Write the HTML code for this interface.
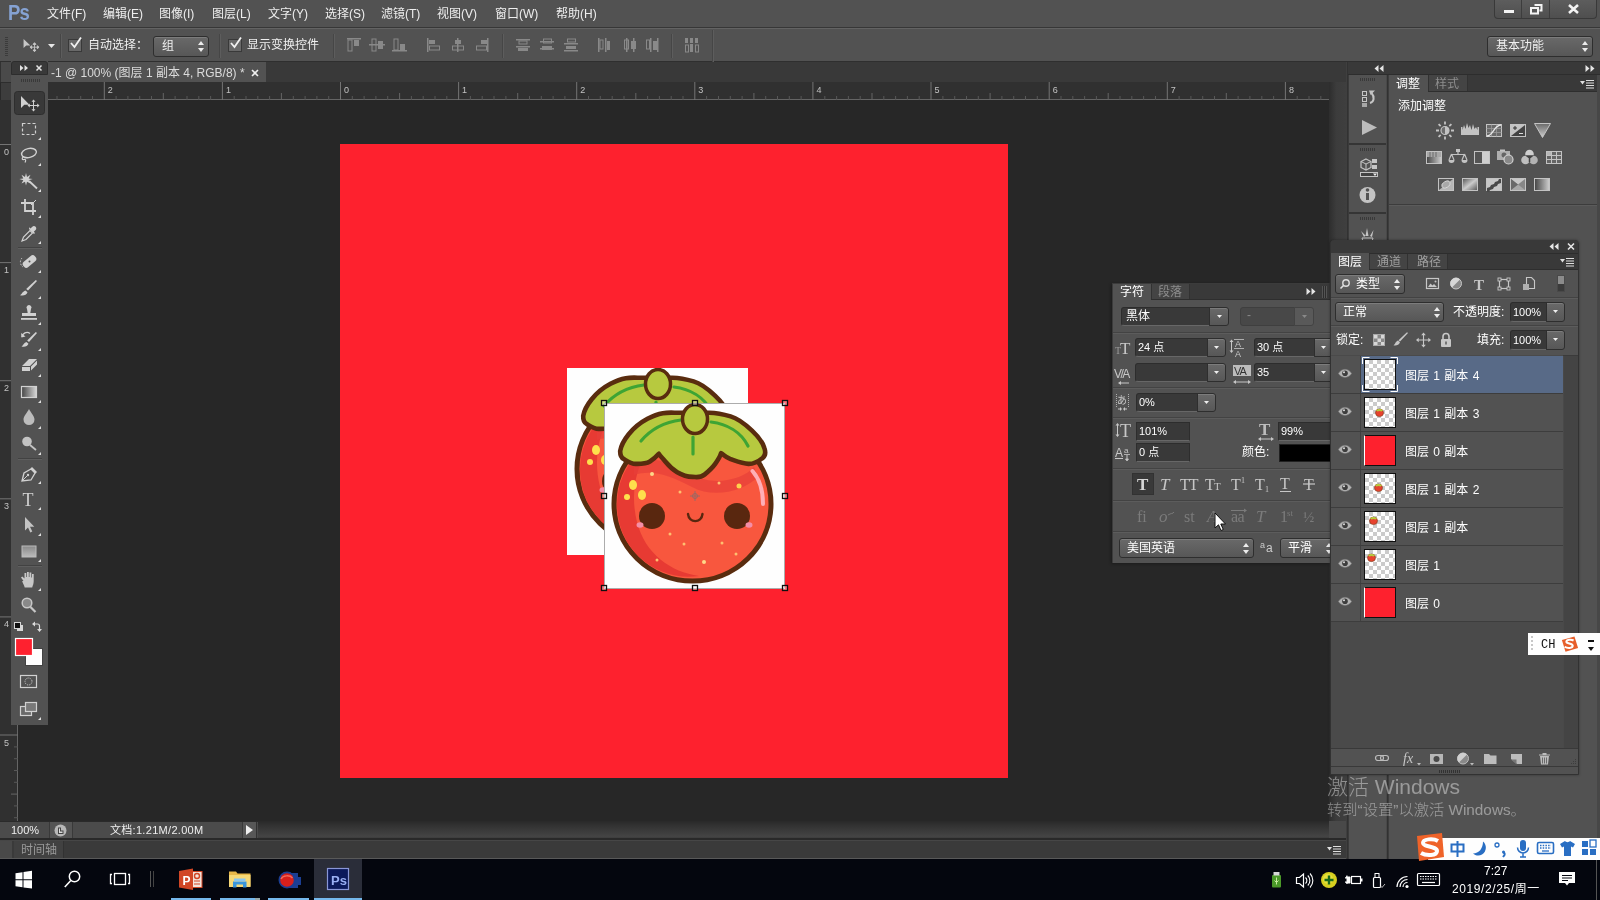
<!DOCTYPE html>
<html lang="zh-CN">
<head>
<meta charset="utf-8">
<title>Photoshop</title>
<style>
*{box-sizing:border-box;margin:0;padding:0}
html,body{width:1600px;height:900px;overflow:hidden;background:#535353}
body{position:relative;font-family:"Liberation Sans","Noto Sans CJK SC",sans-serif;font-size:12px;color:#f0f0f0;line-height:1}
.abs{position:absolute}
.t{position:absolute;white-space:nowrap;line-height:1}
svg{position:absolute;overflow:visible}
/* menu bar */
#menubar{left:0;top:0;width:1600px;height:28px;background:#535353;border-bottom:1px solid #383838}
#menubar .t{top:8px;font-size:12px;color:#efefef}
#menubar #ps{left:8px;top:2px;font-size:22px;font-weight:bold;color:#86a3d4;letter-spacing:-1px;font-family:"Liberation Sans",sans-serif;transform:scaleX(.84);transform-origin:left top}
/* options bar */
#optbar{left:0;top:28px;width:1600px;height:34px;background:#535353;border-top:1px solid #646464;border-bottom:1px solid #303030}
/* tab row */
#tabrow{left:0;top:62px;width:1347px;height:20px;background:#3a3a3a}
#tab{left:47px;top:0;width:219px;height:20px;background:#535353}
/* ruler */
#hruler{left:0;top:82px;width:1329px;height:18px;background:#313131}
#vruler{left:0;top:100px;width:18px;height:721px;background:#313131}
#work{left:18px;top:100px;width:1311px;height:721px;background:#282828}
#doc{left:340px;top:144px;width:668px;height:634px;background:#ff222f}
/* generic */
.dd{position:absolute;border:1px solid #2f2f2f;border-radius:3px;background:linear-gradient(#6a6a6a,#585858);box-shadow:inset 0 1px 0 #7d7d7d}
.inp{position:absolute;background:#3a3a3a;border:1px solid #2e2e2e;border-bottom-color:#686868}
.lbl{color:#f0f0f0}
</style>
</head>
<body>
<div id="root" style="position:absolute;left:0;top:0;width:1600px;height:900px;will-change:transform;opacity:.999">
<!-- ===== MENU BAR ===== -->
<div id="menubar" class="abs">
  <div id="ps" class="t">Ps</div>
  <div class="t" style="left:47px">文件(F)</div>
  <div class="t" style="left:103px">编辑(E)</div>
  <div class="t" style="left:159px">图像(I)</div>
  <div class="t" style="left:212px">图层(L)</div>
  <div class="t" style="left:268px">文字(Y)</div>
  <div class="t" style="left:325px">选择(S)</div>
  <div class="t" style="left:381px">滤镜(T)</div>
  <div class="t" style="left:437px">视图(V)</div>
  <div class="t" style="left:495px">窗口(W)</div>
  <div class="t" style="left:556px">帮助(H)</div>
  <!-- window buttons -->
  <div class="abs" style="left:1494px;top:0;width:103px;height:19px;border:1px solid #3a3a3a;border-top:none;border-radius:0 0 4px 4px;background:linear-gradient(#5e5e5e,#505050)"></div>
  <div class="abs" style="left:1521px;top:0;width:1px;height:18px;background:#3e3e3e"></div>
  <div class="abs" style="left:1549px;top:0;width:1px;height:18px;background:#3e3e3e"></div>
  <div class="abs" style="left:1504px;top:10px;width:10px;height:3px;background:#f4f4f4"></div>
  <svg style="left:1530px;top:4px" width="13" height="11" viewBox="0 0 13 11"><path d="M4.5 1h7v5.5h-2" fill="none" stroke="#f4f4f4" stroke-width="2"/><rect x="1" y="4" width="7" height="5.5" fill="none" stroke="#f4f4f4" stroke-width="2"/></svg>
  <svg style="left:1568px;top:4px" width="11" height="10" viewBox="0 0 11 10"><path d="M1 1l9 8M10 1l-9 8" stroke="#f4f4f4" stroke-width="2.600"/></svg>
</div>

<!-- ===== OPTIONS BAR ===== -->
<div id="optbar" class="abs"><div class="abs" style="left:0;top:1px;width:1600px;height:32px">
  <!-- grip -->
  <div class="abs" style="left:5px;top:7px;width:3px;height:19px;background:repeating-linear-gradient(#3c3c3c 0 1px,transparent 1px 2px)"></div>
  <!-- move tool icon -->
  <svg style="left:22px;top:8px" width="18" height="14" viewBox="0 0 20 16"><path d="M1.5 1v10.5l3-2.8h4.8z" fill="#c8c8c8"/><path d="M14 6.2v8.6M9.7 10.5h8.6M14 5.3l-1.7 2h3.4zM14 15.7l-1.7-2h3.4zM8.8 10.5l2-1.7v3.4zM19.2 10.5l-2-1.7v3.4z" stroke="#c8c8c8" stroke-width="1" fill="#c8c8c8"/></svg>
  <svg style="left:48px;top:14px" width="7" height="4" viewBox="0 0 7 4"><path d="M0 0h7l-3.5 4z" fill="#e8e8e8"/></svg>
  <div class="abs" style="left:60px;top:4px;width:1px;height:24px;background:#474747;box-shadow:1px 0 0 #5e5e5e"></div>
  <!-- checkbox 1 -->
  <div class="abs" style="left:68px;top:9px;width:14px;height:13px;background:#6a6a6a;border:1px solid #3a3a3a"></div>
  <svg style="left:69px;top:6px" width="14" height="14" viewBox="0 0 14 14"><path d="M2 7l3.5 4L12 1.5" fill="none" stroke="#f2f2f2" stroke-width="1.8"/></svg>
  <div class="t lbl" style="left:88px;top:9px;font-size:12px">自动选择：</div>
  <div class="dd" style="left:153px;top:6px;width:56px;height:21px"></div>
  <div class="t lbl" style="left:162px;top:10px">组</div>
  <svg style="left:198px;top:11px" width="6" height="11" viewBox="0 0 6 11"><path d="M0 4h6L3 0zM0 7h6l-3 4z" fill="#ededed"/></svg>
  <div class="abs" style="left:219px;top:4px;width:1px;height:24px;background:#474747;box-shadow:1px 0 0 #5e5e5e"></div>
  <!-- checkbox 2 -->
  <div class="abs" style="left:228px;top:9px;width:14px;height:13px;background:#6a6a6a;border:1px solid #3a3a3a"></div>
  <svg style="left:229px;top:6px" width="14" height="14" viewBox="0 0 14 14"><path d="M2 7l3.5 4L12 1.5" fill="none" stroke="#f2f2f2" stroke-width="1.8"/></svg>
  <div class="t lbl" style="left:247px;top:9px">显示变换控件</div>
  <div class="abs" style="left:333px;top:4px;width:1px;height:24px;background:#474747;box-shadow:1px 0 0 #5e5e5e"></div>
  <!-- align icons (disabled) -->
  <svg style="left:345px;top:7px" width="360" height="16" viewBox="0 0 360 16" fill="#8a8a8a" stroke="none">
    <!-- group 1: align top / vcenter / bottom -->
    <rect x="2" y="1" width="14" height="1.5"/><rect x="3" y="3" width="4" height="11" fill="none" stroke="#8a8a8a"/><rect x="9" y="3" width="5" height="6"/>
    <rect x="24" y="7" width="16" height="1.5"/><rect x="27" y="2" width="4" height="12" fill="none" stroke="#8a8a8a"/><rect x="33" y="4" width="5" height="8"/>
    <rect x="47" y="13" width="15" height="1.5"/><rect x="49" y="2" width="4" height="11" fill="none" stroke="#8a8a8a"/><rect x="55" y="7" width="5" height="6"/>
    <!-- group 2: align left / hcenter / right -->
    <rect x="82" y="1" width="1.5" height="14"/><rect x="84" y="3" width="6" height="4"/><rect x="84.5" y="9" width="10" height="4" fill="none" stroke="#8a8a8a"/>
    <rect x="112" y="1" width="1.5" height="14"/><rect x="110" y="3" width="6" height="4"/><rect x="107.500" y="9" width="11" height="4" fill="none" stroke="#8a8a8a"/>
    <rect x="142" y="1" width="1.500" height="14"/><rect x="136" y="3" width="6" height="4"/><rect x="131.500" y="9" width="10" height="4" fill="none" stroke="#8a8a8a"/>
    <!-- group 3: distribute vertical -->
    <rect x="171" y="2" width="14" height="1.5"/><rect x="174" y="4" width="8" height="3" fill="none" stroke="#8a8a8a"/><rect x="171" y="9" width="14" height="1.5"/><rect x="173" y="11" width="10" height="3"/>
    <rect x="195" y="4" width="14" height="1.500"/><rect x="198.500" y="2" width="8" height="4" fill="none" stroke="#8a8a8a"/><rect x="195" y="11" width="14" height="1.5"/><rect x="197" y="9" width="10" height="4"/>
    <rect x="219" y="6" width="14" height="1.5"/><rect x="222.500" y="2" width="8" height="3" fill="none" stroke="#8a8a8a"/><rect x="219" y="13" width="14" height="1.500"/><rect x="221" y="9" width="10" height="3"/>
    <!-- group 4: distribute horizontal -->
    <rect x="253" y="1" width="1.500" height="14"/><rect x="255" y="3" width="3" height="9" fill="none" stroke="#8a8a8a"/><rect x="260" y="1" width="1.5" height="14"/><rect x="262" y="4" width="3" height="9"/>
    <rect x="281" y="1" width="1.5" height="14"/><rect x="279.500" y="3" width="4" height="9" fill="none" stroke="#8a8a8a"/><rect x="288" y="1" width="1.5" height="14"/><rect x="286" y="4" width="5" height="8"/>
    <rect x="305" y="1" width="1.500" height="14"/><rect x="301.500" y="3" width="3" height="9" fill="none" stroke="#8a8a8a"/><rect x="312" y="1" width="1.500" height="14"/><rect x="308" y="4" width="4" height="9"/>
    <!-- auto-align -->
    <rect x="340" y="1" width="3" height="5"/><rect x="345" y="1" width="3" height="5"/><rect x="350" y="1" width="3" height="5"/>
    <rect x="340.500" y="8" width="3" height="7" fill="none" stroke="#8a8a8a"/><rect x="345" y="7" width="3" height="8"/><rect x="350.500" y="8" width="3" height="7" fill="none" stroke="#8a8a8a"/>
  </svg>
  <div class="abs" style="left:502px;top:4px;width:1px;height:24px;background:#474747;box-shadow:1px 0 0 #5e5e5e"></div>
  <div class="abs" style="left:671px;top:4px;width:1px;height:24px;background:#474747;box-shadow:1px 0 0 #5e5e5e"></div>
  <div class="abs" style="left:712px;top:0;width:1px;height:32px;background:#474747;box-shadow:1px 0 0 #5e5e5e"></div>
  <!-- workspace dropdown -->
  <div class="dd" style="left:1487px;top:6px;width:106px;height:21px"></div>
  <div class="t lbl" style="left:1496px;top:10px;font-size:12px">基本功能</div>
  <svg style="left:1582px;top:11px" width="6" height="11" viewBox="0 0 6 11"><path d="M0 4h6L3 0zM0 7h6l-3 4z" fill="#ededed"/></svg>
</div></div>

<!-- ===== TAB ROW ===== -->
<div id="tabrow" class="abs">
  <div id="tab" class="abs"></div>
  <div class="t" style="left:51px;top:5px;font-size:12px;color:#dcdcdc">-1 @ 100% (图层 1 副本 4, RGB/8) *</div>
  <svg style="left:251px;top:7px" width="8" height="8" viewBox="0 0 8 8"><path d="M1 1l6 6M7 1l-6 6" stroke="#f0f0f0" stroke-width="1.6"/></svg>
</div>
<!-- ===== RULERS + WORK AREA ===== -->
<div id="hruler" class="abs"></div><div id="vruler" class="abs"></div><div id="work" class="abs"></div>
<svg style="left:0;top:82px" width="1329" height="18" viewBox="0 0 1329 18"><rect x="47" y="17" width="1282" height="1" fill="#666"/><rect x="56.5" y="14" width="1" height="4" fill="#595959"/><rect x="68.3" y="14" width="1" height="4" fill="#595959"/><rect x="80.2" y="14" width="1" height="4" fill="#595959"/><rect x="92.0" y="14" width="1" height="4" fill="#595959"/><rect x="103.8" y="0" width="1" height="18" fill="#757575"/><rect x="115.6" y="14" width="1" height="4" fill="#595959"/><rect x="127.4" y="14" width="1" height="4" fill="#595959"/><rect x="139.2" y="14" width="1" height="4" fill="#595959"/><rect x="151.0" y="14" width="1" height="4" fill="#595959"/><rect x="162.8" y="11" width="1" height="7" fill="#666"/><rect x="174.6" y="14" width="1" height="4" fill="#595959"/><rect x="186.5" y="14" width="1" height="4" fill="#595959"/><rect x="198.3" y="14" width="1" height="4" fill="#595959"/><rect x="210.1" y="14" width="1" height="4" fill="#595959"/><rect x="221.9" y="0" width="1" height="18" fill="#757575"/><rect x="233.7" y="14" width="1" height="4" fill="#595959"/><rect x="245.5" y="14" width="1" height="4" fill="#595959"/><rect x="257.3" y="14" width="1" height="4" fill="#595959"/><rect x="269.1" y="14" width="1" height="4" fill="#595959"/><rect x="280.9" y="11" width="1" height="7" fill="#666"/><rect x="292.8" y="14" width="1" height="4" fill="#595959"/><rect x="304.6" y="14" width="1" height="4" fill="#595959"/><rect x="316.4" y="14" width="1" height="4" fill="#595959"/><rect x="328.2" y="14" width="1" height="4" fill="#595959"/><rect x="340.0" y="0" width="1" height="18" fill="#757575"/><rect x="351.8" y="14" width="1" height="4" fill="#595959"/><rect x="363.6" y="14" width="1" height="4" fill="#595959"/><rect x="375.4" y="14" width="1" height="4" fill="#595959"/><rect x="387.2" y="14" width="1" height="4" fill="#595959"/><rect x="399.1" y="11" width="1" height="7" fill="#666"/><rect x="410.9" y="14" width="1" height="4" fill="#595959"/><rect x="422.7" y="14" width="1" height="4" fill="#595959"/><rect x="434.5" y="14" width="1" height="4" fill="#595959"/><rect x="446.3" y="14" width="1" height="4" fill="#595959"/><rect x="458.1" y="0" width="1" height="18" fill="#757575"/><rect x="469.9" y="14" width="1" height="4" fill="#595959"/><rect x="481.7" y="14" width="1" height="4" fill="#595959"/><rect x="493.5" y="14" width="1" height="4" fill="#595959"/><rect x="505.4" y="14" width="1" height="4" fill="#595959"/><rect x="517.2" y="11" width="1" height="7" fill="#666"/><rect x="529.0" y="14" width="1" height="4" fill="#595959"/><rect x="540.8" y="14" width="1" height="4" fill="#595959"/><rect x="552.6" y="14" width="1" height="4" fill="#595959"/><rect x="564.4" y="14" width="1" height="4" fill="#595959"/><rect x="576.2" y="0" width="1" height="18" fill="#757575"/><rect x="588.0" y="14" width="1" height="4" fill="#595959"/><rect x="599.8" y="14" width="1" height="4" fill="#595959"/><rect x="611.7" y="14" width="1" height="4" fill="#595959"/><rect x="623.5" y="14" width="1" height="4" fill="#595959"/><rect x="635.3" y="11" width="1" height="7" fill="#666"/><rect x="647.1" y="14" width="1" height="4" fill="#595959"/><rect x="658.9" y="14" width="1" height="4" fill="#595959"/><rect x="670.7" y="14" width="1" height="4" fill="#595959"/><rect x="682.5" y="14" width="1" height="4" fill="#595959"/><rect x="694.3" y="0" width="1" height="18" fill="#757575"/><rect x="706.1" y="14" width="1" height="4" fill="#595959"/><rect x="718.0" y="14" width="1" height="4" fill="#595959"/><rect x="729.8" y="14" width="1" height="4" fill="#595959"/><rect x="741.6" y="14" width="1" height="4" fill="#595959"/><rect x="753.4" y="11" width="1" height="7" fill="#666"/><rect x="765.2" y="14" width="1" height="4" fill="#595959"/><rect x="777.0" y="14" width="1" height="4" fill="#595959"/><rect x="788.8" y="14" width="1" height="4" fill="#595959"/><rect x="800.6" y="14" width="1" height="4" fill="#595959"/><rect x="812.4" y="0" width="1" height="18" fill="#757575"/><rect x="824.3" y="14" width="1" height="4" fill="#595959"/><rect x="836.1" y="14" width="1" height="4" fill="#595959"/><rect x="847.9" y="14" width="1" height="4" fill="#595959"/><rect x="859.7" y="14" width="1" height="4" fill="#595959"/><rect x="871.5" y="11" width="1" height="7" fill="#666"/><rect x="883.3" y="14" width="1" height="4" fill="#595959"/><rect x="895.1" y="14" width="1" height="4" fill="#595959"/><rect x="906.9" y="14" width="1" height="4" fill="#595959"/><rect x="918.7" y="14" width="1" height="4" fill="#595959"/><rect x="930.5" y="0" width="1" height="18" fill="#757575"/><rect x="942.4" y="14" width="1" height="4" fill="#595959"/><rect x="954.2" y="14" width="1" height="4" fill="#595959"/><rect x="966.0" y="14" width="1" height="4" fill="#595959"/><rect x="977.8" y="14" width="1" height="4" fill="#595959"/><rect x="989.6" y="11" width="1" height="7" fill="#666"/><rect x="1001.4" y="14" width="1" height="4" fill="#595959"/><rect x="1013.2" y="14" width="1" height="4" fill="#595959"/><rect x="1025.0" y="14" width="1" height="4" fill="#595959"/><rect x="1036.8" y="14" width="1" height="4" fill="#595959"/><rect x="1048.7" y="0" width="1" height="18" fill="#757575"/><rect x="1060.5" y="14" width="1" height="4" fill="#595959"/><rect x="1072.3" y="14" width="1" height="4" fill="#595959"/><rect x="1084.1" y="14" width="1" height="4" fill="#595959"/><rect x="1095.9" y="14" width="1" height="4" fill="#595959"/><rect x="1107.7" y="11" width="1" height="7" fill="#666"/><rect x="1119.5" y="14" width="1" height="4" fill="#595959"/><rect x="1131.3" y="14" width="1" height="4" fill="#595959"/><rect x="1143.1" y="14" width="1" height="4" fill="#595959"/><rect x="1155.0" y="14" width="1" height="4" fill="#595959"/><rect x="1166.8" y="0" width="1" height="18" fill="#757575"/><rect x="1178.6" y="14" width="1" height="4" fill="#595959"/><rect x="1190.4" y="14" width="1" height="4" fill="#595959"/><rect x="1202.2" y="14" width="1" height="4" fill="#595959"/><rect x="1214.0" y="14" width="1" height="4" fill="#595959"/><rect x="1225.8" y="11" width="1" height="7" fill="#666"/><rect x="1237.6" y="14" width="1" height="4" fill="#595959"/><rect x="1249.4" y="14" width="1" height="4" fill="#595959"/><rect x="1261.3" y="14" width="1" height="4" fill="#595959"/><rect x="1273.1" y="14" width="1" height="4" fill="#595959"/><rect x="1284.9" y="0" width="1" height="18" fill="#757575"/><rect x="1296.7" y="14" width="1" height="4" fill="#595959"/><rect x="1308.5" y="14" width="1" height="4" fill="#595959"/><rect x="1320.3" y="14" width="1" height="4" fill="#595959"/><text x="107.8" y="11" font-size="9" fill="#c4c4c4" font-family="Liberation Sans, sans-serif">2</text><text x="225.9" y="11" font-size="9" fill="#c4c4c4" font-family="Liberation Sans, sans-serif">1</text><text x="344.0" y="11" font-size="9" fill="#c4c4c4" font-family="Liberation Sans, sans-serif">0</text><text x="462.1" y="11" font-size="9" fill="#c4c4c4" font-family="Liberation Sans, sans-serif">1</text><text x="580.2" y="11" font-size="9" fill="#c4c4c4" font-family="Liberation Sans, sans-serif">2</text><text x="698.3" y="11" font-size="9" fill="#c4c4c4" font-family="Liberation Sans, sans-serif">3</text><text x="816.4" y="11" font-size="9" fill="#c4c4c4" font-family="Liberation Sans, sans-serif">4</text><text x="934.5" y="11" font-size="9" fill="#c4c4c4" font-family="Liberation Sans, sans-serif">5</text><text x="1052.7" y="11" font-size="9" fill="#c4c4c4" font-family="Liberation Sans, sans-serif">6</text><text x="1170.8" y="11" font-size="9" fill="#c4c4c4" font-family="Liberation Sans, sans-serif">7</text><text x="1288.9" y="11" font-size="9" fill="#c4c4c4" font-family="Liberation Sans, sans-serif">8</text></svg>
<svg style="left:0;top:100px" width="18" height="721" viewBox="0 0 18 721"><rect x="17" y="0" width="1" height="721" fill="#666"/><rect x="14" y="8.6" width="4" height="1" fill="#595959"/><rect x="14" y="20.4" width="4" height="1" fill="#595959"/><rect x="14" y="32.2" width="4" height="1" fill="#595959"/><rect x="0" y="44.0" width="18" height="1" fill="#757575"/><rect x="14" y="55.8" width="4" height="1" fill="#595959"/><rect x="14" y="67.6" width="4" height="1" fill="#595959"/><rect x="14" y="79.4" width="4" height="1" fill="#595959"/><rect x="14" y="91.2" width="4" height="1" fill="#595959"/><rect x="11" y="103.1" width="7" height="1" fill="#666"/><rect x="14" y="114.9" width="4" height="1" fill="#595959"/><rect x="14" y="126.7" width="4" height="1" fill="#595959"/><rect x="14" y="138.5" width="4" height="1" fill="#595959"/><rect x="14" y="150.3" width="4" height="1" fill="#595959"/><rect x="0" y="162.1" width="18" height="1" fill="#757575"/><rect x="14" y="173.9" width="4" height="1" fill="#595959"/><rect x="14" y="185.7" width="4" height="1" fill="#595959"/><rect x="14" y="197.5" width="4" height="1" fill="#595959"/><rect x="14" y="209.4" width="4" height="1" fill="#595959"/><rect x="11" y="221.2" width="7" height="1" fill="#666"/><rect x="14" y="233.0" width="4" height="1" fill="#595959"/><rect x="14" y="244.8" width="4" height="1" fill="#595959"/><rect x="14" y="256.6" width="4" height="1" fill="#595959"/><rect x="14" y="268.4" width="4" height="1" fill="#595959"/><rect x="0" y="280.2" width="18" height="1" fill="#757575"/><rect x="14" y="292.0" width="4" height="1" fill="#595959"/><rect x="14" y="303.8" width="4" height="1" fill="#595959"/><rect x="14" y="315.7" width="4" height="1" fill="#595959"/><rect x="14" y="327.5" width="4" height="1" fill="#595959"/><rect x="11" y="339.3" width="7" height="1" fill="#666"/><rect x="14" y="351.1" width="4" height="1" fill="#595959"/><rect x="14" y="362.9" width="4" height="1" fill="#595959"/><rect x="14" y="374.7" width="4" height="1" fill="#595959"/><rect x="14" y="386.5" width="4" height="1" fill="#595959"/><rect x="0" y="398.3" width="18" height="1" fill="#757575"/><rect x="14" y="410.1" width="4" height="1" fill="#595959"/><rect x="14" y="422.0" width="4" height="1" fill="#595959"/><rect x="14" y="433.8" width="4" height="1" fill="#595959"/><rect x="14" y="445.6" width="4" height="1" fill="#595959"/><rect x="11" y="457.4" width="7" height="1" fill="#666"/><rect x="14" y="469.2" width="4" height="1" fill="#595959"/><rect x="14" y="481.0" width="4" height="1" fill="#595959"/><rect x="14" y="492.8" width="4" height="1" fill="#595959"/><rect x="14" y="504.6" width="4" height="1" fill="#595959"/><rect x="0" y="516.4" width="18" height="1" fill="#757575"/><rect x="14" y="528.3" width="4" height="1" fill="#595959"/><rect x="14" y="540.1" width="4" height="1" fill="#595959"/><rect x="14" y="551.9" width="4" height="1" fill="#595959"/><rect x="14" y="563.7" width="4" height="1" fill="#595959"/><rect x="11" y="575.5" width="7" height="1" fill="#666"/><rect x="14" y="587.3" width="4" height="1" fill="#595959"/><rect x="14" y="599.1" width="4" height="1" fill="#595959"/><rect x="14" y="610.9" width="4" height="1" fill="#595959"/><rect x="14" y="622.7" width="4" height="1" fill="#595959"/><rect x="0" y="634.5" width="18" height="1" fill="#757575"/><rect x="14" y="646.4" width="4" height="1" fill="#595959"/><rect x="14" y="658.2" width="4" height="1" fill="#595959"/><rect x="14" y="670.0" width="4" height="1" fill="#595959"/><rect x="14" y="681.8" width="4" height="1" fill="#595959"/><rect x="11" y="693.6" width="7" height="1" fill="#666"/><rect x="14" y="705.4" width="4" height="1" fill="#595959"/><rect x="14" y="717.2" width="4" height="1" fill="#595959"/><text x="4" y="55.0" font-size="9" fill="#c4c4c4" font-family="Liberation Sans, sans-serif">0</text><text x="4" y="173.1" font-size="9" fill="#c4c4c4" font-family="Liberation Sans, sans-serif">1</text><text x="4" y="291.2" font-size="9" fill="#c4c4c4" font-family="Liberation Sans, sans-serif">2</text><text x="4" y="409.3" font-size="9" fill="#c4c4c4" font-family="Liberation Sans, sans-serif">3</text><text x="4" y="527.4" font-size="9" fill="#c4c4c4" font-family="Liberation Sans, sans-serif">4</text><text x="4" y="645.5" font-size="9" fill="#c4c4c4" font-family="Liberation Sans, sans-serif">5</text></svg>
<div class="abs" style="left:0;top:62px;width:12px;height:20px;background:#4b4b4b;border-left:1px solid #333"></div><div class="abs" style="left:0;top:82px;width:18px;height:18px;background:#3e3e3e;border-left:1px solid #2a2a2a;border-top:1px solid #2e2e2e"></div>
<div id="doc" class="abs"></div>
<!-- ===== ARTWORK ===== -->
<svg style="left:0;top:0" width="1600" height="900" viewBox="0 0 1600 900">
  <defs>
    <g id="berry">
      <rect x="0" y="0" width="181" height="186" fill="#fff"/>
      <!-- body -->
      <ellipse cx="88.5" cy="101" rx="78.500" ry="77" fill="#f9583f" stroke="#5a2d10" stroke-width="5"/>
      <path d="M13 101a75.500 74 0 0 1 42-66c-22 20-30 52-22 84s34 50 62 54c-40 6-82-24-82-72z" fill="#e83b34"/>
      <path d="M30 60c20-8 40 0 60 12s50 4 60-8l4 10c-14 14-44 22-66 10s-40-18-58-12z" fill="#e8403a" opacity=".7"/>
      <!-- highlight -->
      <path d="M148.500 68c7 8 10.500 20 10.500 33" fill="none" stroke="#ffb0b8" stroke-width="4" stroke-linecap="round"/>
      <!-- yellow dots -->
      <ellipse cx="29" cy="82" rx="4" ry="5" fill="#ffe14d"/><ellipse cx="38" cy="92" rx="4" ry="5" fill="#ffe14d"/><circle cx="23" cy="94" r="3" fill="#ffe14d"/>
      <circle cx="48" cy="71" r="2" fill="#ffd98a"/><circle cx="135" cy="83" r="2.500" fill="#ffd24d"/><circle cx="115" cy="80" r="1.500" fill="#ffc070"/>
      <circle cx="76" cy="89" r="1.500" fill="#ffc070"/><circle cx="66" cy="131" r="1.500" fill="#ffc070"/><circle cx="80" cy="141" r="1.500" fill="#ffc070"/><circle cx="118" cy="140" r="1.500" fill="#ffc070"/><circle cx="100" cy="159" r="2" fill="#ffd98a"/><circle cx="132" cy="151" r="1.500" fill="#ffc070"/><circle cx="53" cy="157" r="1.500" fill="#ffc070"/>
      <!-- face -->
      <circle cx="48" cy="113" r="13" fill="#5a2810"/><circle cx="133" cy="113" r="13" fill="#5a2810"/>
      <ellipse cx="36" cy="122" rx="3.500" ry="2.800" fill="#f58fa8"/><ellipse cx="145" cy="122" rx="3.500" ry="2.800" fill="#f58fa8"/>
      <path d="M84 111c1 9.500 13.500 9.500 14.500 0" fill="none" stroke="#5a2810" stroke-width="2.400" stroke-linecap="round"/>
      <!-- leaf -->
      <path d="M16.200 47.800C18 38 28 24 43.500 15.800S66 10 76.800 9.800L105.300 9.800C112 10 118 11 126.600 13.400S142 22 148 27.600S159 40 160.500 45.400C162 50 161 53 158.700 54.900S150 61 144.500 60.900S132 58 126.600 56.100S120 52 117.100 50.200C116 54 114 57 111.200 60.900S105 68 100.500 71.600S93 74 88.600 73.900S78 72 73.200 69.200S65 63 61.300 58.500S57 54 54.800 50.800C52 54 50 56 45.900 58.500S36 61 31.600 60.900S23 58 19.800 56.100S16 52 16.200 47.800z" fill="#b8ca40" stroke="#5a2d10" stroke-width="4.600" stroke-linejoin="round"/>
      <path d="M37 38c10-12 24-19 40-21" fill="none" stroke="#3fa535" stroke-width="3.200" stroke-linecap="round"/>
      <path d="M107 19c16 2 30 10 37 24" fill="none" stroke="#3fa535" stroke-width="3.200" stroke-linecap="round"/>
      <path d="M89 34v17" fill="none" stroke="#3fa535" stroke-width="3.200" stroke-linecap="round"/>
      <!-- stem ball -->
      <ellipse cx="91" cy="16" rx="12.500" ry="14.500" fill="#b8ca40" stroke="#5a2d10" stroke-width="3.500"/>
    </g>
    <g id="hdl"><rect x="-2.500" y="-2.500" width="5" height="5" fill="#fff" fill-opacity=".4" stroke="#111" stroke-width="1.300"/></g>
  </defs>
  <clipPath id="cb"><rect x="0" y="0" width="181" height="187"/></clipPath>
  <g transform="translate(567,368)" clip-path="url(#cb)"><rect width="181" height="187" fill="#fff"/><use href="#berry"/></g>
  <g transform="translate(604,403)"><use href="#berry"/></g>
  <rect x="604.500" y="403.500" width="180" height="185" fill="none" stroke="#777" stroke-width=".6"/>
  <!-- transform handles -->
  <use href="#hdl" x="604" y="403"/><use href="#hdl" x="695" y="403"/><use href="#hdl" x="785" y="403"/>
  <use href="#hdl" x="604" y="496"/><use href="#hdl" x="785" y="496"/>
  <use href="#hdl" x="604" y="588"/><use href="#hdl" x="695" y="588"/><use href="#hdl" x="785" y="588"/>
  <!-- center mark -->
  <path d="M695 491v10M690 496h10" stroke="#9a6a66" stroke-width="1"/><circle cx="695" cy="496" r="2.500" fill="none" stroke="#9a6a66" stroke-width="1"/>
</svg>
<!-- ===== TOOLS PANEL ===== -->
<div class="abs" style="left:11px;top:61px;width:37px;height:664px;background:#535353"></div>
<div class="abs" style="left:11px;top:61px;width:37px;height:14px;background:#3a3a3a;border:1px solid #2e2e2e;border-radius:3px 3px 0 0"></div>
<svg style="left:0;top:0" width="60" height="730" viewBox="0 0 60 730" fill="#d2d2d2" stroke="none">
  <!-- header icons -->
  <path d="M20 65l3.500 3-3.500 3zM24.500 65l3.500 3-3.500 3z" fill="#e4e4e4"/>
  <path d="M36.500 65.500l5 5M41.500 65.500l-5 5" stroke="#e4e4e4" stroke-width="1.500"/>
  <!-- grip -->
  <g fill="#3a3a3a"><rect x="21" y="79" width="1" height="3"/><rect x="23" y="79" width="1" height="3"/><rect x="25" y="79" width="1" height="3"/><rect x="27" y="79" width="1" height="3"/><rect x="29" y="79" width="1" height="3"/><rect x="31" y="79" width="1" height="3"/><rect x="33" y="79" width="1" height="3"/><rect x="35" y="79" width="1" height="3"/><rect x="37" y="79" width="1" height="3"/><rect x="39" y="79" width="1" height="3"/></g>
  <!-- selected box -->
  <rect x="14.500" y="91.500" width="30" height="23" rx="3" fill="#3a3a3a" stroke="#2f2f2f"/>
  <!-- move -->
  <path d="M21 96v12l3.300-3.200h5.200z"/>
  <path d="M33.500 101v9M29 105.500h9" stroke="#d2d2d2" stroke-width="1"/><path d="M33.500 99.500l-2 2.300h4zM33.500 111.500l-2-2.300h4zM27.500 105.500l2.300-2v4zM39.500 105.500l-2.300-2v4z"/>
  <!-- marquee -->
  <rect x="22.500" y="123.500" width="13" height="11" fill="none" stroke="#d2d2d2" stroke-width="1.200" stroke-dasharray="3 2"/>
  <!-- lasso -->
  <ellipse cx="29" cy="153" rx="7.500" ry="4.500" fill="none" stroke="#d2d2d2" stroke-width="1.400" transform="rotate(-12 29 153)"/>
  <path d="M23.500 157c-2 1-1.500 3 .5 2.500s2 1 1 3" fill="none" stroke="#d2d2d2" stroke-width="1.200"/>
  <!-- wand -->
  <path d="M29 181l8 7.500" stroke="#d2d2d2" stroke-width="1.800"/>
  <path d="M26 173l1 4 3.500-2.200-1.800 3.700 4 .5-4 1.200 1.800 3.300-3.500-1.800-1 3.800-1-3.800-3.500 1.800 1.800-3.300-4-1.200 4-.5-1.800-3.700 3.500 2.200z"/>
  <!-- crop -->
  <path d="M25 199v12h11M21 203h12v12" fill="none" stroke="#d2d2d2" stroke-width="1.800"/><path d="M31 205l5-5" stroke="#d2d2d2" stroke-width="1"/>
  <!-- eyedropper -->
  <path d="M22 241l1.500-4 6.500-6.500 2.500 2.500-6.500 6.500z" fill="none" stroke="#d2d2d2" stroke-width="1.200"/><path d="M29 229l5 5 1-1-1.200-1.200 1.800-1.800c1-1 .8-2.500 0-3.300s-2.300-1-3.300 0l-1.800 1.800-1.200-1.200z"/>
  <!-- separator -->
  <rect x="18" y="247" width="24" height="1" fill="#434343"/><rect x="18" y="248" width="24" height="1" fill="#5f5f5f"/>
  <!-- heal -->
  <rect x="22" y="258" width="15" height="7" rx="3" transform="rotate(-40 29.500 261.500)"/><circle cx="29.500" cy="261.500" r="1" fill="#535353"/><path d="M22 258a6 6 0 0 0 1 9" fill="none" stroke="#d2d2d2" stroke-width="1" stroke-dasharray="1.500 1.500"/>
  <!-- brush -->
  <path d="M37 281l-9 9.500-1.800-1.600 9.600-9z"/><path d="M25.500 290.500l2 1.800c-1 3-4 3.700-7.500 3 2-1 2-3.500 5.500-4.800z"/>
  <!-- stamp -->
  <path d="M27 309a2.500 2.500 0 1 1 4 0l-.700 4h5.700v3h-14v-3h5.700z"/><rect x="21" y="318" width="16" height="1.800"/>
  <!-- history brush -->
  <path d="M37 333l-8 9-1.800-1.600 8.600-8.500z"/><path d="M26.500 342l2 1.800c-1 2.800-4 3.400-7 2.700 2-1 1.800-3.300 5-4.500z"/><path d="M22 337a5 5 0 0 1 8-3.500" fill="none" stroke="#d2d2d2" stroke-width="1.300"/><path d="M21 333l.500 4.500 4-1z"/>
  <!-- eraser -->
  <path d="M22 366l7-7h8l-7 7zM22 367h8v4h-8zM31 366.500l6-6v4l-6 6z"/>
  <!-- gradient -->
  <defs><linearGradient id="gr1" x1="0" x2="1"><stop offset="0" stop-color="#444"/><stop offset="1" stop-color="#d8d8d8"/></linearGradient><linearGradient id="gr2" x1="0" x2="0" y1="0" y2="1"><stop offset="0" stop-color="#8a8a8a"/><stop offset="1" stop-color="#bdbdbd"/></linearGradient></defs>
  <rect x="21.500" y="386.500" width="15" height="11" fill="url(#gr1)" stroke="#d2d2d2" stroke-width="1.200"/>
  <!-- blur drop -->
  <path d="M29 409c2 4 5.500 7 5.500 10.500a5.500 5.500 0 0 1-11 0c0-3.500 3.500-6.500 5.500-10.500z" fill="#bdbdbd"/>
  <!-- dodge -->
  <circle cx="27" cy="441.500" r="4.800" fill="#c4c4c4"/><path d="M30 445l6 5" stroke="#c4c4c4" stroke-width="1.800"/>
  <rect x="18" y="458" width="24" height="1" fill="#434343"/><rect x="18" y="459" width="24" height="1" fill="#5f5f5f"/>
  <!-- pen -->
  <path d="M22 481l2-8 7-4 4 4-4 7z" fill="none" stroke="#d2d2d2" stroke-width="1.300"/><path d="M22 481l5.500-5.500" stroke="#d2d2d2" stroke-width="1"/><circle cx="28" cy="475" r="1.200"/><path d="M32 467l5 5-1.500 1.500-5-5z"/>
  <!-- type -->
  <text x="22.500" y="505.500" font-family="Liberation Serif, serif" font-size="18" fill="#d2d2d2">T</text>
  <!-- path select -->
  <path d="M25 517v13.500l3-3 2.300 5 2-1-2.300-4.800h4.300z" fill="#c4c4c4"/>
  <!-- shape -->
  <rect x="22" y="546" width="14" height="11" fill="url(#gr2)" stroke="#bdbdbd" stroke-width="1"/>
  <rect x="18" y="565" width="24" height="1" fill="#434343"/><rect x="18" y="566" width="24" height="1" fill="#5f5f5f"/>
  <!-- hand -->
  <path d="M23.500 581l-2.500-3.500 1.300-1 2.200 2v-5.500h1.800v4h.7v-5h1.800v5h.7v-4.500h1.800v5h.7v-3.500h1.700v7c0 3-1 4.500-1.500 6.500h-7.500c-.500-2.500-2-4-2.500-6.500z" fill="#c8c8c8"/>
  <!-- zoom -->
  <circle cx="27" cy="603" r="4.800" fill="#8a8a8a" stroke="#c8c8c8" stroke-width="1.500"/><path d="M30.500 607l5 5" stroke="#c8c8c8" stroke-width="2.200"/>
  <!-- default colours / swap -->
  <rect x="17" y="625" width="6" height="6" fill="#d8d8d8"/><rect x="14.500" y="622.500" width="6" height="6" fill="#111" stroke="#d8d8d8"/>
  <path d="M34 624h3.500a2 2 0 0 1 2 2v3.500" fill="none" stroke="#dcdcdc" stroke-width="1.200"/><path d="M32 624l3-2.500v5zM39.500 632l-2.500-3h5z" fill="#dcdcdc"/>
  <!-- fg/bg colours -->
  <rect x="25.500" y="648.500" width="17" height="17" fill="#fff" stroke="#444"/>
  <rect x="15.500" y="638.500" width="17" height="17" fill="#ff2230" stroke="#fff" stroke-width="1.200"/>
  <!-- quick mask -->
  <rect x="20.500" y="675.500" width="16" height="12" fill="none" stroke="#d2d2d2" stroke-width="1.200"/><circle cx="28.500" cy="681.500" r="3.500" fill="none" stroke="#d2d2d2" stroke-width="1" stroke-dasharray="1 1"/>
  <!-- screen mode -->
  <rect x="20.500" y="706.500" width="11" height="9" fill="#6a6a6a" stroke="#d2d2d2" stroke-width="1.200"/><rect x="25.500" y="702.500" width="11" height="9" fill="#7a7a7a" stroke="#d2d2d2" stroke-width="1.200"/>
  <!-- flyout corner triangles -->
  <g fill="#e0e0e0">
    <path d="M41 137v3h-3z"/><path d="M41 163v3h-3z"/><path d="M41 189v3h-3z"/><path d="M41 215v3h-3z"/><path d="M41 241v3h-3z"/>
    <path d="M41 270v3h-3z"/><path d="M41 296v3h-3z"/><path d="M41 322v3h-3z"/><path d="M41 348v3h-3z"/><path d="M41 374v3h-3z"/><path d="M41 400v3h-3z"/><path d="M41 426v3h-3z"/><path d="M41 452v3h-3z"/>
    <path d="M41 481v3h-3z"/><path d="M41 507v3h-3z"/><path d="M41 533v3h-3z"/><path d="M41 559v3h-3z"/><path d="M41 588v3h-3z"/><path d="M41 717v3h-3z"/>
  </g>
</svg>
<!-- ===== SCROLLBARS / STATUS ===== -->
<div class="abs" style="left:1329px;top:82px;width:18px;height:757px;background:linear-gradient(90deg,#2e2e2e,#3d3d3d 40%,#404040)"></div>
<div class="abs" style="left:0;top:821px;width:1347px;height:18px;background:linear-gradient(#2a2a2a,#333 25%,#454545 85%,#3a3a3a)"></div>
<div class="abs" style="left:1329px;top:821px;width:17px;height:17px;background:#4a4a4a"></div>
<!-- status bar -->
<div class="abs" style="left:0;top:822px;width:258px;height:17px;background:#4c4c4c"></div>
<div class="t" style="left:11px;top:825px;font-size:11px;color:#f0f0f0">100%</div>
<div class="abs" style="left:49px;top:822px;width:24px;height:17px;background:#555;border-left:1px solid #3a3a3a;border-right:1px solid #3a3a3a"></div>
<svg style="left:54px;top:824px" width="13" height="13" viewBox="0 0 13 13"><circle cx="6.500" cy="6.500" r="6" fill="#b8b8b8"/><path d="M4 3.500h3v3h2.500v3.500h-5.500z" fill="#444"/><path d="M5 4.500h1v3h2.500v1.500h-3.500z" fill="#ddd"/></svg>
<div class="t" style="left:110px;top:825px;font-size:11px;color:#f0f0f0;letter-spacing:.300px">文档:1.21M/2.00M</div>
<div class="abs" style="left:242px;top:822px;width:15px;height:17px;background:#585858;border-left:1px solid #3a3a3a;border-right:1px solid #333"></div>
<svg style="left:246px;top:825px" width="8" height="10" viewBox="0 0 8 10"><path d="M0 0l7 5-7 5z" fill="#f0f0f0"/></svg>
<!-- timeline bar -->
<div class="abs" style="left:0;top:838px;width:1347px;height:21px;background:#3b3b3b;border-top:2px solid #2a2a2a;border-bottom:1px solid #5a5a5a;box-shadow:inset 0 1px 0 #474747"></div>
<div class="abs" style="left:0;top:841px;width:12px;height:17px;background:#4a4a4a"></div>
<div class="abs" style="left:14px;top:841px;width:50px;height:17px;background:#424242;border-right:1px solid #333"></div>
<div class="t" style="left:21px;top:844px;font-size:12px;color:#9a9a9a">时间轴</div>
<svg style="left:1327px;top:846px" width="14" height="8" viewBox="0 0 14 8"><path d="M0 1h5l-2.500 3.500z" fill="#e0e0e0"/><path d="M6 .500h8M6 3h8M6 5.500h8M6 8h8" stroke="#e0e0e0" stroke-width="1"/></svg>

<!-- ===== RIGHT DOCK ===== -->
<div class="abs" style="left:1347px;top:62px;width:253px;height:798px;background:#535353"></div>
<div class="abs" style="left:1346px;top:62px;width:3px;height:798px;background:linear-gradient(90deg,#404040 0 1px,#333 1px 2px,#3c3c3c 2px)"></div>
<div class="abs" style="left:1386px;top:62px;width:3px;height:798px;background:linear-gradient(90deg,#4a4a4a 0 1px,#333 1px 2px,#3e3e3e 2px)"></div>
<div class="abs" style="left:1597px;top:62px;width:3px;height:798px;background:#484848"></div>
<!-- dock header -->
<div class="abs" style="left:1348px;top:62px;width:252px;height:13px;background:#3a3a3a;border-bottom:1px solid #2e2e2e"></div>
<svg style="left:1374px;top:65px" width="10" height="7" viewBox="0 0 10 7"><path d="M4.500 0v7l-4-3.500zM9.500 0v7l-4-3.500z" fill="#e6e6e6"/></svg>
<svg style="left:1585px;top:65px" width="10" height="7" viewBox="0 0 10 7"><path d="M.500 0v7l4-3.500zM5.500 0v7l4-3.500z" fill="#e6e6e6"/></svg>
<!-- icon strip separators -->
<div class="abs" style="left:1349px;top:143px;width:37px;height:2px;background:#363636"></div>
<div class="abs" style="left:1349px;top:212px;width:37px;height:2px;background:#363636"></div>
<svg style="left:1349px;top:75px" width="37" height="170" viewBox="0 0 37 170" fill="#c6c6c6">
  <g fill="#3a3a3a">
    <path d="M13 3h1v3h-1zM15 3h1v3h-1zM17 3h1v3h-1zM19 3h1v3h-1zM21 3h1v3h-1zM23 3h1v3h-1zM25 3h1v3h-1zM11 3h1v3h-1z"/>
    <path d="M13 73h1v3h-1zM15 73h1v3h-1zM17 73h1v3h-1zM19 73h1v3h-1zM21 73h1v3h-1zM23 73h1v3h-1zM25 73h1v3h-1zM11 73h1v3h-1z"/>
    <path d="M13 142h1v3h-1zM15 142h1v3h-1zM17 142h1v3h-1zM19 142h1v3h-1zM21 142h1v3h-1zM23 142h1v3h-1zM25 142h1v3h-1zM11 142h1v3h-1z"/>
  </g>
  <!-- history -->
  <rect x="13.500" y="16.500" width="4" height="4" fill="none" stroke="#c6c6c6"/><rect x="13.500" y="22.500" width="4" height="4" fill="none" stroke="#c6c6c6"/><rect x="13" y="28" width="5" height="4" fill="#a8a8a8"/>
  <path d="M21 28c4-1 5-6 1.500-10" fill="none" stroke="#c6c6c6" stroke-width="2"/><path d="M20 15.500h6l-4.500 4.500z"/>
  <!-- actions play -->
  <path d="M13 45l15 7.500-15 7.500z" fill="#bdbdbd"/>
  <!-- 3d/properties -->
  <path d="M17 84l5 2.500v6l-5 2.500-5-2.500v-6z" fill="none" stroke="#c6c6c6" stroke-width="1.200"/><path d="M12 86.500l5 2.500 5-2.500M17 89v6" fill="none" stroke="#c6c6c6" stroke-width="1"/>
  <rect x="23" y="84" width="5" height="4"/><rect x="23" y="90" width="5" height="4"/><rect x="11.500" y="97.500" width="17" height="4" fill="#444" stroke="#c6c6c6"/><path d="M24 98.500h4l-2 2.500z" fill="#eee"/>
  <!-- info -->
  <circle cx="18.500" cy="120" r="8" fill="#c4c4c4"/><rect x="17" y="118" width="3" height="7" fill="#535353"/><circle cx="18.500" cy="115" r="1.800" fill="#535353"/>
  <!-- brush presets -->
  <path d="M18 153l-1.500 8h3zM12 156l3 6 1.500-1.500zM24.500 155l-3.500 6 2 1z" fill="#c6c6c6"/><path d="M13 163h11l-1.500 5h-8z" fill="none" stroke="#c6c6c6"/>
</svg>
<!-- Adjustments panel -->
<div class="abs" style="left:1389px;top:75px;width:208px;height:17px;background:#3a3a3a;border-bottom:1px solid #2f2f2f"></div>
<div class="abs" style="left:1389px;top:75px;width:39px;height:17px;background:#535353"></div>
<div class="abs" style="left:1428px;top:75px;width:40px;height:16px;background:#454545;border-left:1px solid #333;border-right:1px solid #333"></div>
<div class="t" style="left:1396px;top:78px;font-size:12px;color:#fff">调整</div>
<div class="t" style="left:1435px;top:78px;font-size:12px;color:#8e8e8e">样式</div>
<svg style="left:1580px;top:80px" width="14" height="8" viewBox="0 0 14 8"><path d="M0 1h5l-2.500 3.500z" fill="#e0e0e0"/><path d="M6 .500h8M6 3h8M6 5.500h8M6 8h8" stroke="#e0e0e0" stroke-width="1"/></svg>
<div class="t" style="left:1398px;top:100px;font-size:12px;color:#fff">添加调整</div>
<div class="abs" style="left:1389px;top:204px;width:208px;height:1px;background:#3d3d3d;box-shadow:0 1px 0 #5c5c5c"></div>
<!-- adjustment icons -->
<svg style="left:1420px;top:115px" width="150" height="85" viewBox="0 0 150 85" fill="#c4c4c4">
  <defs>
    <linearGradient id="ag1" x1="0" x2="1"><stop offset="0" stop-color="#444"/><stop offset="1" stop-color="#d0d0d0"/></linearGradient>
    <linearGradient id="ag2" x1="0" x2="1" y1="0" y2="1"><stop offset="0" stop-color="#555"/><stop offset=".5" stop-color="#ccc"/><stop offset="1" stop-color="#555"/></linearGradient>
    <linearGradient id="ag3" x1="0" x2="0" y1="0" y2="1"><stop offset="0" stop-color="#6a6a6a"/><stop offset="1" stop-color="#d0d0d0"/></linearGradient>
  </defs>
  <!-- row 1 -->
  <circle cx="25" cy="15.500" r="4" fill="#6e6e6e" stroke="#c4c4c4" stroke-width="1.200"/><path d="M25 11.500a4 4 0 0 1 0 8z"/>
  <path d="M25 6.500v3M25 21.500v3M16 15.500h3M31 15.500h3M18.600 9.100l2.100 2.100M29.300 19.800l2.100 2.100M31.400 9.100l-2.100 2.100M20.700 19.800l-2.100 2.100" stroke="#c4c4c4" stroke-width="1.800"/>
  <path d="M41 20v-8l1.500 0v3l1.500-5 1.500 4 1.500-6 1.500 5 1.500-3 1.500 5 1.500-6 1.500 5 1.500-2 1.500 3v-3h1.500v8z"/>
  <rect x="66.500" y="9.500" width="15" height="12" fill="#6a6a6a" stroke="#c4c4c4"/><path d="M66.500 13.500h15M66.500 17.500h15M71.500 9.500v12M76.500 9.500v12" stroke="#9a9a9a" stroke-width=".8"/><path d="M67 21c6 0 7-11 14-11" fill="none" stroke="#eaeaea" stroke-width="1.300"/>
  <rect x="90.500" y="9.500" width="15" height="12" fill="#444" stroke="#c4c4c4"/><path d="M91 21v-11h14z" fill="#c4c4c4"/><path d="M93 13h4M95 11v4" stroke="#333" stroke-width="1"/><path d="M99 18.500h4" stroke="#ddd" stroke-width="1"/>
  <path d="M114.500 8.500h16l-8 14z" fill="url(#ag3)" stroke="#c4c4c4"/>
  <!-- row 2 -->
  <rect x="6.500" y="36.500" width="15" height="12" fill="url(#ag1)" stroke="#c4c4c4"/><rect x="7" y="37" width="14" height="5" fill="#a8a8a8"/><path d="M10 37v5M13 37v5M16 37v5" stroke="#6a6a6a"/>
  <path d="M38 35v4M31 39.500h14M31.500 39l-2.500 6M31.500 39l2.500 6M44.500 39l-2.500 6M44.500 39l2.500 6" stroke="#c4c4c4" stroke-width="1.200" fill="none"/><path d="M28.500 45h6a3 3 0 0 1-6 0zM41.500 45h6a3 3 0 0 1-6 0zM36 34h4v3h-4z"/>
  <rect x="54.500" y="36.500" width="15" height="12" fill="#555" stroke="#c4c4c4"/><rect x="62" y="37" width="7" height="11" fill="#cfcfcf"/>
  <rect x="77" y="36" width="13" height="9" fill="#b0b0b0"/><rect x="80" y="34.500" width="5" height="2"/><circle cx="84" cy="40" r="2.500" fill="#666"/><circle cx="88.500" cy="44.500" r="4.500" fill="#8a8a8a" stroke="#d4d4d4" stroke-width="1.200"/>
  <circle cx="109.500" cy="39" r="4.300" fill="#d0d0d0"/><circle cx="105.500" cy="45" r="4.300" fill="#c0c0c0"/><circle cx="113.500" cy="45" r="4.300" fill="#b4b4b4"/><path d="M109.500 43l-2.500-2h5zM109.500 43v4" stroke="#444" stroke-width="1.500" fill="#444"/>
  <rect x="126.500" y="36.500" width="15" height="12" fill="#666" stroke="#c4c4c4"/><path d="M126.500 40.500h15M126.500 44.500h15M131.500 36.500v12M136.500 36.500v12" stroke="#c4c4c4" stroke-width="1"/><rect x="127" y="37" width="4" height="3" fill="#b8b8b8"/>
  <!-- row 3 -->
  <rect x="18.500" y="63.500" width="15" height="12" fill="#b8b8b8" stroke="#c4c4c4"/><path d="M19 75v-11h14z" fill="#5a5a5a"/><ellipse cx="26" cy="69.500" rx="4.500" ry="3" fill="#aaa" stroke="#ddd" stroke-width=".8" transform="rotate(-30 26 69.500)"/>
  <rect x="42.500" y="63.500" width="15" height="12" fill="url(#ag2)" stroke="#c4c4c4"/>
  <rect x="66.500" y="63.500" width="15" height="12" fill="#c8c8c8" stroke="#c4c4c4"/><path d="M67 73l3-1 1-2 3-1 1-2 3-1 1-2h2v4l-3 1-1 2-3 1-1 2-3 1-1 2h-2z" fill="#4a4a4a"/>
  <rect x="90.500" y="63.500" width="15" height="12" fill="#888" stroke="#c4c4c4"/><path d="M91 64l7 5.500 7-5.500z" fill="#c8c8c8"/><path d="M91 75l7-5.500 7 5.500z" fill="#a8a8a8"/><path d="M91 64l7 5.500-7 5.500z" fill="#6a6a6a"/>
  <rect x="114.500" y="63.500" width="15" height="12" fill="url(#ag1)" stroke="#c4c4c4"/>
</svg>
<!-- ===== CHARACTER PANEL ===== -->
<div class="abs" style="left:1112px;top:283px;width:218px;height:280px;background:#535353;border-left:1px solid #3c3c3c;border-top:1px solid #3c3c3c;box-shadow:-1px 1px 3px rgba(0,0,0,.3)"></div>
<div class="abs" style="left:1113px;top:284px;width:217px;height:16px;background:#3a3a3a;border-bottom:1px solid #2f2f2f"></div>
<div class="abs" style="left:1113px;top:284px;width:38px;height:16px;background:#535353"></div>
<div class="abs" style="left:1151px;top:284px;width:39px;height:15px;background:#454545;border-left:1px solid #333;border-right:1px solid #333"></div>
<div class="t" style="left:1120px;top:286px;font-size:12px;color:#fff">字符</div>
<div class="t" style="left:1158px;top:286px;font-size:12px;color:#8e8e8e">段落</div>
<svg style="left:1306px;top:288px" width="10" height="7" viewBox="0 0 10 7"><path d="M.500 0v7l4-3.500zM5.500 0v7l4-3.500z" fill="#e6e6e6"/></svg>
<div class="abs" style="left:1322px;top:286px;width:5px;height:12px;background:repeating-linear-gradient(90deg,#555 0 1px,#2e2e2e 1px 2px)"></div>
<!-- font row -->
<div class="inp" style="left:1121px;top:307px;width:89px;height:19px;border-radius:3px 0 0 3px"></div>
<div class="dd" style="left:1209px;top:307px;width:20px;height:19px;border-radius:0 3px 3px 0"></div>
<svg style="left:1217px;top:315px" width="5" height="3" viewBox="0 0 7 4"><path d="M0 0h7l-3.500 4z" fill="#f0f0f0"/></svg>
<div class="t" style="left:1126px;top:310px;font-size:12px;color:#fff">黑体</div>
<div class="inp" style="left:1240px;top:307px;width:55px;height:19px;border-radius:3px 0 0 3px;background:#494949;border-color:#404040"></div>
<div class="dd" style="left:1294px;top:307px;width:20px;height:19px;border-radius:0 3px 3px 0;background:#5a5a5a;box-shadow:none;border-color:#444"></div>
<svg style="left:1302px;top:315px" width="5" height="3" viewBox="0 0 7 4"><path d="M0 0h7l-3.500 4z" fill="#8a8a8a"/></svg>
<div class="t" style="left:1247px;top:309px;font-size:12px;color:#8a8a8a">-</div>
<div class="abs" style="left:1113px;top:332px;width:217px;height:1px;background:#444;box-shadow:0 1px 0 #5d5d5d"></div>
<!-- size / leading -->
<div class="inp" style="left:1135px;top:338px;width:73px;height:19px;border-radius:3px 0 0 3px"></div>
<div class="dd" style="left:1207px;top:338px;width:19px;height:19px;border-radius:0 3px 3px 0"></div>
<svg style="left:1214px;top:346px" width="5" height="3" viewBox="0 0 7 4"><path d="M0 0h7l-3.500 4z" fill="#f0f0f0"/></svg>
<div class="t" style="left:1138px;top:342px;font-size:11px;color:#fff">24 点</div>
<div class="inp" style="left:1254px;top:338px;width:61px;height:19px;border-radius:3px 0 0 3px"></div>
<div class="dd" style="left:1314px;top:338px;width:19px;height:19px;border-radius:0 3px 3px 0"></div>
<svg style="left:1321px;top:346px" width="5" height="3" viewBox="0 0 7 4"><path d="M0 0h7l-3.500 4z" fill="#f0f0f0"/></svg>
<div class="t" style="left:1257px;top:342px;font-size:11px;color:#fff">30 点</div>
<!-- kerning / tracking -->
<div class="inp" style="left:1135px;top:363px;width:73px;height:19px;border-radius:3px 0 0 3px"></div>
<div class="dd" style="left:1207px;top:363px;width:19px;height:19px;border-radius:0 3px 3px 0"></div>
<svg style="left:1214px;top:371px" width="5" height="3" viewBox="0 0 7 4"><path d="M0 0h7l-3.500 4z" fill="#f0f0f0"/></svg>
<div class="inp" style="left:1254px;top:363px;width:61px;height:19px;border-radius:3px 0 0 3px"></div>
<div class="dd" style="left:1314px;top:363px;width:19px;height:19px;border-radius:0 3px 3px 0"></div>
<svg style="left:1321px;top:371px" width="5" height="3" viewBox="0 0 7 4"><path d="M0 0h7l-3.500 4z" fill="#f0f0f0"/></svg>
<div class="t" style="left:1257px;top:367px;font-size:11px;color:#fff">35</div>
<div class="abs" style="left:1113px;top:387px;width:217px;height:1px;background:#444;box-shadow:0 1px 0 #5d5d5d"></div>
<!-- tsume -->
<div class="inp" style="left:1136px;top:393px;width:62px;height:19px;border-radius:3px 0 0 3px"></div>
<div class="dd" style="left:1197px;top:393px;width:19px;height:19px;border-radius:0 3px 3px 0"></div>
<svg style="left:1204px;top:401px" width="5" height="3" viewBox="0 0 7 4"><path d="M0 0h7l-3.500 4z" fill="#f0f0f0"/></svg>
<div class="t" style="left:1139px;top:397px;font-size:11px;color:#fff">0%</div>
<div class="abs" style="left:1113px;top:417px;width:217px;height:1px;background:#444;box-shadow:0 1px 0 #5d5d5d"></div>
<!-- scale rows -->
<div class="inp" style="left:1136px;top:422px;width:54px;height:19px"></div>
<div class="t" style="left:1139px;top:426px;font-size:11px;color:#fff">101%</div>
<div class="inp" style="left:1278px;top:422px;width:55px;height:19px"></div>
<div class="t" style="left:1281px;top:426px;font-size:11px;color:#fff">99%</div>
<div class="inp" style="left:1136px;top:443px;width:54px;height:19px"></div>
<div class="t" style="left:1139px;top:447px;font-size:11px;color:#fff">0 点</div>
<div class="t" style="left:1242px;top:446px;font-size:12px;color:#fff">颜色:</div>
<div class="abs" style="left:1279px;top:444px;width:54px;height:18px;background:#000;border:1px solid #222"></div>
<div class="abs" style="left:1113px;top:468px;width:217px;height:1px;background:#444;box-shadow:0 1px 0 #5d5d5d"></div>
<!-- left-column icons -->
<svg style="left:1112px;top:300px" width="220" height="170" viewBox="0 0 220 170" fill="#c8c8c8" font-family="Liberation Serif, serif">
  <text x="3" y="54" font-size="10" fill="#9a9a9a">T</text><text x="8" y="54" font-size="17">T</text>
  <text x="123" y="47" font-size="9" font-family="Liberation Sans, sans-serif">A</text><text x="123" y="57" font-size="9" font-family="Liberation Sans, sans-serif">A</text><path d="M122 48.500h10M122 39.500h10" stroke="#c8c8c8" stroke-width=".8"/><path d="M119.500 41v10" stroke="#c8c8c8"/><path d="M119.500 39.500l-2 2.500h4zM119.500 53l-2-2.500h4z"/>
  <text x="2" y="78" font-size="12" font-family="Liberation Sans, sans-serif" letter-spacing="-1.500">V/A</text><path d="M8 83h9" stroke="#c8c8c8"/><path d="M6 83l3-2v4z"/>
  <rect x="121" y="65" width="18" height="11" fill="#bdbdbd"/><text x="122" y="75" font-size="11" font-family="Liberation Sans, sans-serif" fill="#333" letter-spacing="-1">VA</text><path d="M123 82h14" stroke="#c8c8c8"/><path d="M121 82l3-2v4zM139 82l-3-2v4z"/>
  <text x="5" y="104" font-size="10" font-family="Noto Sans CJK JP, sans-serif">あ</text><path d="M4.500 94v14M16.500 94v14" stroke="#c8c8c8" stroke-width=".8" stroke-dasharray="1 1"/><path d="M6 109h3M12 109h3" stroke="#c8c8c8"/><path d="M10 109l-2-2v4zM11 109l2-2v4z"/>
  <text x="8" y="137" font-size="18">T</text><path d="M5.500 125v10" stroke="#c8c8c8"/><path d="M5.500 123l-2 2.500h4zM5.500 137l-2-2.500h4z"/>
  <text x="147" y="135" font-size="17" font-weight="bold" fill="#bdbdbd">T</text><path d="M148 139h12" stroke="#c8c8c8"/><path d="M146 139l3-2v4zM162 139l-3-2v4z"/>
  <text x="3" y="157" font-size="12" font-family="Liberation Sans, sans-serif">A</text><path d="M3 158.500h8" stroke="#c8c8c8"/><text x="12" y="153" font-size="8" font-family="Liberation Sans, sans-serif">a</text><path d="M15 155v5" stroke="#c8c8c8"/><path d="M15 161l-1.500-2h3zM12 154.500h6" stroke="#c8c8c8" stroke-width=".8"/>
</svg>
<!-- style buttons -->
<div class="abs" style="left:1132px;top:473px;width:22px;height:22px;background:#3a3a3a;border:1px solid #333"></div>
<svg style="left:1112px;top:470px" width="220" height="64" viewBox="0 0 220 64" fill="#c8c8c8" font-family="Liberation Serif, serif">
  <text x="25" y="20" font-size="17" font-weight="bold" fill="#d8d8d8">T</text>
  <text x="48" y="20" font-size="17" font-style="italic">T</text>
  <text x="68" y="20" font-size="16" letter-spacing="-1">TT</text>
  <text x="93" y="20" font-size="16">T</text><text x="102" y="20" font-size="11">T</text>
  <text x="119" y="20" font-size="16">T</text><text x="129" y="13" font-size="8">1</text>
  <text x="143" y="20" font-size="16">T</text><text x="153" y="22" font-size="8">1</text>
  <text x="168" y="19" font-size="16">T</text><path d="M168 21.500h11" stroke="#c8c8c8"/>
  <text x="192" y="20" font-size="16">T</text><path d="M191 14h12" stroke="#c8c8c8" stroke-width="1.200"/>
  <g fill="#7c7c7c">
    <text x="25" y="52" font-size="16">fi</text>
    <text x="47" y="52" font-size="17" font-style="italic">o</text><path d="M56 45c3-2 5-1 6-3" stroke="#7c7c7c" fill="none"/>
    <text x="72" y="52" font-size="16">st</text>
    <text x="95" y="52" font-size="17" font-style="italic">A</text>
    <text x="119" y="52" font-size="16" letter-spacing="-.5">aa</text><path d="M119 40.500h14" stroke="#7c7c7c"/><path d="M135 40.500l-3-2v4z"/>
    <text x="144" y="52" font-size="17" font-style="italic">T</text>
    <text x="168" y="52" font-size="16">1</text><text x="175" y="46" font-size="9">st</text>
    <text x="191" y="52" font-size="15">½</text>
  </g>
</svg>
<div class="abs" style="left:1113px;top:500px;width:217px;height:1px;background:#444;box-shadow:0 1px 0 #5d5d5d"></div>
<div class="abs" style="left:1113px;top:531px;width:217px;height:1px;background:#444;box-shadow:0 1px 0 #5d5d5d"></div>
<!-- language row -->
<div class="dd" style="left:1119px;top:538px;width:135px;height:20px"></div>
<div class="t" style="left:1127px;top:542px;font-size:12px;color:#fff">美国英语</div>
<svg style="left:1243px;top:543px" width="6" height="11" viewBox="0 0 6 11"><path d="M0 4h6L3 0zM0 7h6l-3 4z" fill="#ededed"/></svg>
<div class="t" style="left:1260px;top:541px;font-size:9px;color:#ccc">a</div><div class="t" style="left:1266px;top:542px;font-size:12px;color:#ccc">a</div>
<div class="dd" style="left:1280px;top:538px;width:60px;height:20px"></div>
<div class="t" style="left:1288px;top:542px;font-size:12px;color:#fff">平滑</div>
<svg style="left:1326px;top:543px" width="6" height="11" viewBox="0 0 6 11"><path d="M0 4h6L3 0zM0 7h6l-3 4z" fill="#ededed"/></svg>
<!-- mouse cursor -->
<svg style="left:1214px;top:512px" width="14" height="20" viewBox="0 0 14 20"><path d="M1 1v15l3.500-3.200 2.500 5.700 2.300-1-2.500-5.500h4.700z" fill="#fff" stroke="#111" stroke-width="1"/></svg>
<!-- ===== LAYERS PANEL ===== -->
<div class="abs" style="left:1330px;top:240px;width:249px;height:535px;background:#535353;border:1px solid #333;border-radius:4px 4px 0 0;box-shadow:0 0 3px rgba(0,0,0,.35)"></div>
<div class="abs" style="left:1331px;top:240px;width:247px;height:13px;background:#3a3a3a;border-radius:3px 3px 0 0"></div>
<svg style="left:1549px;top:243px" width="26" height="8" viewBox="0 0 26 8"><path d="M4.500 0v7l-4-3.500zM9.500 0v7l-4-3.500z" fill="#e6e6e6"/><path d="M19 .500l6 6M25 .500l-6 6" stroke="#e6e6e6" stroke-width="1.600"/></svg>
<div class="abs" style="left:1331px;top:253px;width:247px;height:17px;background:#3a3a3a;border-top:1px solid #2e2e2e;border-bottom:1px solid #2f2f2f"></div>
<div class="abs" style="left:1331px;top:253px;width:38px;height:17px;background:#535353"></div>
<div class="abs" style="left:1369px;top:254px;width:39px;height:15px;background:#454545;border-left:1px solid #333;border-right:1px solid #333"></div>
<div class="abs" style="left:1408px;top:254px;width:40px;height:15px;background:#454545;border-right:1px solid #333"></div>
<div class="t" style="left:1338px;top:256px;font-size:12px;color:#fff">图层</div>
<div class="t" style="left:1377px;top:256px;font-size:12px;color:#a0a0a0">通道</div>
<div class="t" style="left:1417px;top:256px;font-size:12px;color:#a0a0a0">路径</div>
<svg style="left:1560px;top:258px" width="14" height="8" viewBox="0 0 14 8"><path d="M0 1h5l-2.500 3.500z" fill="#e0e0e0"/><path d="M6 .500h8M6 3h8M6 5.500h8M6 8h8" stroke="#e0e0e0" stroke-width="1"/></svg>
<div class="dd" style="left:1335px;top:274px;width:70px;height:20px"></div>
<svg style="left:1339px;top:278px" width="12" height="12" viewBox="0 0 12 12"><circle cx="7" cy="5" r="3.200" fill="none" stroke="#e0e0e0" stroke-width="1.400"/><path d="M4.500 7.500l-3 3" stroke="#e0e0e0" stroke-width="1.600"/></svg>
<div class="t" style="left:1356px;top:278px;font-size:12px;color:#fff">类型</div>
<svg style="left:1394px;top:279px" width="6" height="11" viewBox="0 0 6 11"><path d="M0 4h6L3 0zM0 7h6l-3 4z" fill="#ededed"/></svg>
<svg style="left:1420px;top:274px" width="150" height="20" viewBox="0 0 150 20" fill="#c8c8c8">
<rect x="6.500" y="4.500" width="12" height="10" fill="none" stroke="#c8c8c8" stroke-width="1.200"/><path d="M8 13l2.500-3.500 2 2 1.500-1.500 3 3z"/><circle cx="15.500" cy="7.500" r="1"/>
<circle cx="36" cy="9.500" r="5.500" fill="#8a8a8a" stroke="#c8c8c8"/><path d="M32 13.500a5.500 5.500 0 0 1 8-8z" fill="#d8d8d8"/>
<text x="54" y="15.500" font-family="Liberation Serif, serif" font-weight="bold" font-size="15" fill="#c8c8c8">T</text>
<rect x="79.500" y="5.500" width="9" height="9" fill="none" stroke="#c8c8c8" stroke-width="1.200"/><g fill="#535353" stroke="#c8c8c8" stroke-width=".9"><rect x="78" y="4" width="3" height="3"/><rect x="87" y="4" width="3" height="3"/><rect x="78" y="13" width="3" height="3"/><rect x="87" y="13" width="3" height="3"/></g>
<path d="M106.500 3.500h5l3 3v8h-8z" fill="none" stroke="#c8c8c8" stroke-width="1.100"/><rect x="103" y="10" width="6" height="6" fill="#b0b0b0"/>
<rect x="137.500" y="1.500" width="7" height="16" fill="#3c3c3c" stroke="#4a4a4a"/><rect x="138" y="2" width="6" height="8" fill="#8c8c8c"/>
</svg>
<div class="abs" style="left:1331px;top:297px;width:247px;height:1px;background:#444;box-shadow:0 1px 0 #5d5d5d"></div>
<div class="dd" style="left:1335px;top:302px;width:109px;height:20px"></div>
<div class="t" style="left:1343px;top:306px;font-size:12px;color:#fff">正常</div>
<svg style="left:1434px;top:307px" width="6" height="11" viewBox="0 0 6 11"><path d="M0 4h6L3 0zM0 7h6l-3 4z" fill="#ededed"/></svg>
<div class="t" style="left:1453px;top:306px;font-size:12px;color:#fff">不透明度:</div>
<div class="inp" style="left:1510px;top:302px;width:37px;height:20px;border-radius:3px 0 0 3px"></div>
<div class="dd" style="left:1546px;top:302px;width:19px;height:20px;border-radius:0 3px 3px 0"></div>
<div class="t" style="left:1513px;top:307px;font-size:11px;color:#fff">100%</div>
<svg style="left:1553px;top:310px" width="5" height="3" viewBox="0 0 7 4"><path d="M0 0h7l-3.500 4z" fill="#f0f0f0"/></svg>
<div class="inp" style="left:1510px;top:330px;width:37px;height:20px;border-radius:3px 0 0 3px"></div>
<div class="dd" style="left:1546px;top:330px;width:19px;height:20px;border-radius:0 3px 3px 0"></div>
<div class="t" style="left:1513px;top:335px;font-size:11px;color:#fff">100%</div>
<svg style="left:1553px;top:338px" width="5" height="3" viewBox="0 0 7 4"><path d="M0 0h7l-3.500 4z" fill="#f0f0f0"/></svg>
<div class="abs" style="left:1331px;top:325px;width:247px;height:1px;background:#444;box-shadow:0 1px 0 #5d5d5d"></div>
<div class="t" style="left:1336px;top:334px;font-size:12px;color:#fff">锁定:</div>
<svg style="left:1370px;top:330px" width="90" height="20" viewBox="0 0 90 20" fill="#c8c8c8">
<rect x="3.500" y="4.500" width="11" height="11" fill="#8a8a8a" stroke="#aaa"/><path d="M4 5h3.500v3.500H4zM7.500 8.500h3.500V12H7.500zM11 5h3v3.500h-3zM4 12h3.500v3H4zM11 12h3v3h-3z" fill="#d8d8d8"/>
<path d="M38 3l-8 8.500-1.500-1.300 8.500-8z"/><path d="M28 10.500l2 1.800c-1 2.800-4 3.700-6.500 3 2-1 1.500-3.500 4.500-4.800z"/>
<path d="M53.500 4v12M47.500 10h12" stroke="#c8c8c8" stroke-width="1.100"/><path d="M53.500 2.500l-2.300 2.700h4.600zM53.500 17.500l-2.300-2.700h4.600zM46 10l2.700-2.300v4.600zM61 10l-2.700-2.300v4.600z"/>
<rect x="71" y="9" width="10" height="8" rx="1"/><path d="M73 9v-2.500a3 3 0 0 1 6 0v2.500" fill="none" stroke="#c8c8c8" stroke-width="1.600"/><rect x="75.300" y="11.500" width="1.400" height="3" fill="#535353"/>
</svg>
<div class="t" style="left:1477px;top:334px;font-size:12px;color:#fff">填充:</div>
<div class="abs" style="left:1331px;top:355px;width:247px;height:1px;background:#3c3c3c"></div>
<div class="abs" style="left:1331px;top:355px;width:232px;height:393px;background:#4b4b4b"></div>
<div class="abs" style="left:1563px;top:356px;width:15px;height:392px;background:#454545;border-left:1px solid #4a4a4a"></div>
<div class="abs" style="left:1331px;top:356px;width:232px;height:38px;background:#596b88;border-bottom:1px solid #3e3e3e"></div>
<div class="abs" style="left:1331px;top:356px;width:30px;height:37px;background:#535353;border-right:1px solid #414141"></div>
<svg style="left:1338px;top:368px" width="14" height="11" viewBox="0 0 14 11"><path d="M.500 5.500c3-5.500 10-5.500 13 0c-3 5-10 5-13 0z" fill="#b4b4b4" stroke="#8a8a8a" stroke-width=".6"/><circle cx="7" cy="5.200" r="2.800" fill="#3e3e3e"/><circle cx="6" cy="4.200" r="1" fill="#ddd"/></svg>
<div class="abs" style="left:1364px;top:359px;width:32px;height:31px;border:1px solid #111;background-color:#fff;background-image:linear-gradient(45deg,#ccc 25%,transparent 25%,transparent 75%,#ccc 75%),linear-gradient(45deg,#ccc 25%,transparent 25%,transparent 75%,#ccc 75%);background-size:8px 8px;background-position:0 0,4px 4px"></div>
<svg style="left:1362px;top:357px" width="36" height="35" viewBox="0 0 36 35"><path d="M.500 7v-6.500h7M28.500 .500h7v6.500M35.500 28v6.500h-7M7.500 34.500h-7v-6.500" fill="none" stroke="#fff" stroke-width="1"/></svg>
<div class="t" style="left:1405px;top:370px;font-size:12px;color:#fff;word-spacing:1px">图层 1 副本 4</div>
<div class="abs" style="left:1331px;top:394px;width:232px;height:38px;background:#535353;border-bottom:1px solid #3e3e3e"></div>
<div class="abs" style="left:1331px;top:394px;width:30px;height:37px;background:#535353;border-right:1px solid #414141"></div>
<svg style="left:1338px;top:406px" width="14" height="11" viewBox="0 0 14 11"><path d="M.500 5.500c3-5.500 10-5.500 13 0c-3 5-10 5-13 0z" fill="#b4b4b4" stroke="#8a8a8a" stroke-width=".6"/><circle cx="7" cy="5.200" r="2.800" fill="#3e3e3e"/><circle cx="6" cy="4.200" r="1" fill="#ddd"/></svg>
<div class="abs" style="left:1364px;top:397px;width:32px;height:31px;border:1px solid #111;background-color:#fff;background-image:linear-gradient(45deg,#ccc 25%,transparent 25%,transparent 75%,#ccc 75%),linear-gradient(45deg,#ccc 25%,transparent 25%,transparent 75%,#ccc 75%);background-size:8px 8px;background-position:0 0,4px 4px"></div>
<svg style="left:1375px;top:407px" width="9" height="10" viewBox="0 0 9 10"><ellipse cx="4.500" cy="5.800" rx="4" ry="3.800" fill="#e8432f" stroke="#7a3a1a" stroke-width=".6"/><path d="M1 3.500c1-2 6-2 7 0l-1.500 1-2-.500-2 .500z" fill="#b8ca40"/></svg>
<div class="t" style="left:1405px;top:408px;font-size:12px;color:#fff;word-spacing:1px">图层 1 副本 3</div>
<div class="abs" style="left:1331px;top:432px;width:232px;height:38px;background:#535353;border-bottom:1px solid #3e3e3e"></div>
<div class="abs" style="left:1331px;top:432px;width:30px;height:37px;background:#535353;border-right:1px solid #414141"></div>
<svg style="left:1338px;top:444px" width="14" height="11" viewBox="0 0 14 11"><path d="M.500 5.500c3-5.500 10-5.500 13 0c-3 5-10 5-13 0z" fill="#b4b4b4" stroke="#8a8a8a" stroke-width=".6"/><circle cx="7" cy="5.200" r="2.800" fill="#3e3e3e"/><circle cx="6" cy="4.200" r="1" fill="#ddd"/></svg>
<div class="abs" style="left:1364px;top:435px;width:32px;height:31px;background:#ff222f;border:1px solid #111;border-left-color:#fff"></div>
<div class="t" style="left:1405px;top:446px;font-size:12px;color:#fff;word-spacing:1px">图层 0 副本</div>
<div class="abs" style="left:1331px;top:470px;width:232px;height:38px;background:#535353;border-bottom:1px solid #3e3e3e"></div>
<div class="abs" style="left:1331px;top:470px;width:30px;height:37px;background:#535353;border-right:1px solid #414141"></div>
<svg style="left:1338px;top:482px" width="14" height="11" viewBox="0 0 14 11"><path d="M.500 5.500c3-5.500 10-5.500 13 0c-3 5-10 5-13 0z" fill="#b4b4b4" stroke="#8a8a8a" stroke-width=".6"/><circle cx="7" cy="5.200" r="2.800" fill="#3e3e3e"/><circle cx="6" cy="4.200" r="1" fill="#ddd"/></svg>
<div class="abs" style="left:1364px;top:473px;width:32px;height:31px;border:1px solid #111;background-color:#fff;background-image:linear-gradient(45deg,#ccc 25%,transparent 25%,transparent 75%,#ccc 75%),linear-gradient(45deg,#ccc 25%,transparent 25%,transparent 75%,#ccc 75%);background-size:8px 8px;background-position:0 0,4px 4px"></div>
<svg style="left:1374px;top:482px" width="9" height="10" viewBox="0 0 9 10"><ellipse cx="4.500" cy="5.800" rx="4" ry="3.800" fill="#e8432f" stroke="#7a3a1a" stroke-width=".6"/><path d="M1 3.500c1-2 6-2 7 0l-1.500 1-2-.500-2 .500z" fill="#b8ca40"/></svg>
<div class="t" style="left:1405px;top:484px;font-size:12px;color:#fff;word-spacing:1px">图层 1 副本 2</div>
<div class="abs" style="left:1331px;top:508px;width:232px;height:38px;background:#535353;border-bottom:1px solid #3e3e3e"></div>
<div class="abs" style="left:1331px;top:508px;width:30px;height:37px;background:#535353;border-right:1px solid #414141"></div>
<svg style="left:1338px;top:520px" width="14" height="11" viewBox="0 0 14 11"><path d="M.500 5.500c3-5.500 10-5.500 13 0c-3 5-10 5-13 0z" fill="#b4b4b4" stroke="#8a8a8a" stroke-width=".6"/><circle cx="7" cy="5.200" r="2.800" fill="#3e3e3e"/><circle cx="6" cy="4.200" r="1" fill="#ddd"/></svg>
<div class="abs" style="left:1364px;top:511px;width:32px;height:31px;border:1px solid #111;background-color:#fff;background-image:linear-gradient(45deg,#ccc 25%,transparent 25%,transparent 75%,#ccc 75%),linear-gradient(45deg,#ccc 25%,transparent 25%,transparent 75%,#ccc 75%);background-size:8px 8px;background-position:0 0,4px 4px"></div>
<svg style="left:1369px;top:515px" width="9" height="10" viewBox="0 0 9 10"><ellipse cx="4.500" cy="5.800" rx="4" ry="3.800" fill="#e8432f" stroke="#7a3a1a" stroke-width=".6"/><path d="M1 3.500c1-2 6-2 7 0l-1.500 1-2-.500-2 .500z" fill="#b8ca40"/></svg>
<div class="t" style="left:1405px;top:522px;font-size:12px;color:#fff;word-spacing:1px">图层 1 副本</div>
<div class="abs" style="left:1331px;top:546px;width:232px;height:38px;background:#535353;border-bottom:1px solid #3e3e3e"></div>
<div class="abs" style="left:1331px;top:546px;width:30px;height:37px;background:#535353;border-right:1px solid #414141"></div>
<svg style="left:1338px;top:558px" width="14" height="11" viewBox="0 0 14 11"><path d="M.500 5.500c3-5.500 10-5.500 13 0c-3 5-10 5-13 0z" fill="#b4b4b4" stroke="#8a8a8a" stroke-width=".6"/><circle cx="7" cy="5.200" r="2.800" fill="#3e3e3e"/><circle cx="6" cy="4.200" r="1" fill="#ddd"/></svg>
<div class="abs" style="left:1364px;top:549px;width:32px;height:31px;border:1px solid #111;background-color:#fff;background-image:linear-gradient(45deg,#ccc 25%,transparent 25%,transparent 75%,#ccc 75%),linear-gradient(45deg,#ccc 25%,transparent 25%,transparent 75%,#ccc 75%);background-size:8px 8px;background-position:0 0,4px 4px"></div>
<svg style="left:1367px;top:552px" width="9" height="10" viewBox="0 0 9 10"><ellipse cx="4.500" cy="5.800" rx="4" ry="3.800" fill="#e8432f" stroke="#7a3a1a" stroke-width=".6"/><path d="M1 3.500c1-2 6-2 7 0l-1.500 1-2-.500-2 .500z" fill="#b8ca40"/></svg>
<div class="t" style="left:1405px;top:560px;font-size:12px;color:#fff;word-spacing:1px">图层 1</div>
<div class="abs" style="left:1331px;top:584px;width:232px;height:38px;background:#535353;border-bottom:1px solid #3e3e3e"></div>
<div class="abs" style="left:1331px;top:584px;width:30px;height:37px;background:#535353;border-right:1px solid #414141"></div>
<svg style="left:1338px;top:596px" width="14" height="11" viewBox="0 0 14 11"><path d="M.500 5.500c3-5.500 10-5.500 13 0c-3 5-10 5-13 0z" fill="#b4b4b4" stroke="#8a8a8a" stroke-width=".6"/><circle cx="7" cy="5.200" r="2.800" fill="#3e3e3e"/><circle cx="6" cy="4.200" r="1" fill="#ddd"/></svg>
<div class="abs" style="left:1364px;top:587px;width:32px;height:31px;background:#ff222f;border:1px solid #111;border-left-color:#fff"></div>
<div class="t" style="left:1405px;top:598px;font-size:12px;color:#fff;word-spacing:1px">图层 0</div>
<div class="abs" style="left:1331px;top:748px;width:247px;height:19px;background:#535353;border-top:1px solid #3a3a3a;border-bottom:1px solid #3a3a3a"></div>
<svg style="left:1370px;top:749px" width="210" height="18" viewBox="0 0 210 18" fill="#bdbdbd">
<rect x="5.500" y="6.500" width="8" height="5" rx="2.500" fill="none" stroke="#bdbdbd" stroke-width="1.200"/><rect x="10.500" y="6.500" width="8" height="5" rx="2.500" fill="none" stroke="#bdbdbd" stroke-width="1.200"/>
<text x="33" y="14" font-family="Liberation Serif, serif" font-style="italic" font-size="14" fill="#c8c8c8">fx</text><path d="M47 14h4l-2 2.500z"/>
<rect x="60" y="5" width="13" height="10" fill="#b8b8b8"/><circle cx="66.500" cy="10" r="3" fill="#4a4a4a"/>
<circle cx="93" cy="9.500" r="5.500" fill="#8a8a8a" stroke="#bdbdbd"/><path d="M89 13.500a5.500 5.500 0 0 1 8-8z" fill="#d0d0d0"/><path d="M100 14h4l-2 2.500z"/>
<path d="M114 5h5l1.500 1.500h6v8.500h-12.500z"/>
<path d="M141 5h11v10h-5l-6-5z" /><path d="M141 10.500h5.500v5z" fill="#777"/>
<path d="M170 7h9l-1 8.500h-7z M169 5.500h11v1h-11z M172.500 4h4v1.500h-4z"/><path d="M172.500 8.500v6M174.500 8.500v6M176.500 8.500v6" stroke="#555" stroke-width=".8"/>
<g fill="#3e3e3e"><rect x="203" y="14" width="1" height="1"/><rect x="205" y="14" width="1" height="1"/><rect x="205" y="12" width="1" height="1"/><rect x="201" y="14" width="1" height="1"/><rect x="203" y="12" width="1" height="1"/><rect x="205" y="10" width="1" height="1"/></g>
</svg>
<div class="abs" style="left:1439px;top:770px;width:22px;height:3px;background:repeating-linear-gradient(90deg,#333 0 1px,transparent 1px 2px)"></div>
<!-- ===== WINDOWS WATERMARK ===== -->
<div class="t" style="left:1327px;top:776px;font-size:21px;color:rgba(255,255,255,.42);font-family:'Liberation Sans','Noto Sans CJK SC',sans-serif;font-weight:300">激活 Windows</div>
<div class="t" style="left:1327px;top:802px;font-size:15.300px;color:rgba(255,255,255,.42);font-family:'Liberation Sans','Noto Sans CJK SC',sans-serif;font-weight:300">转到“设置”以激活 Windows。</div>

<!-- ===== IME FLOATING BAR ===== -->
<div class="abs" style="left:1528px;top:633px;width:72px;height:22px;background:#fff"></div>
<div class="abs" style="left:1531px;top:636px;width:2px;height:16px;background:repeating-linear-gradient(#c8c8c8 0 2px,transparent 2px 4px)"></div>
<div class="t" style="left:1541px;top:639px;font-size:12px;color:#111;font-family:'Liberation Mono',monospace">CH</div>
<svg style="left:1561px;top:636px" width="18" height="17" viewBox="0 0 20 18"><path d="M1 4l14-4 4 13-14 4z" fill="#e8602c"/><path d="M14 4.500c-3-1.500-8-1-8 1.500s7 1.500 7 4.500-6 3-9 1" fill="none" stroke="#fff" stroke-width="2.300"/></svg>
<svg style="left:1587px;top:639px" width="8" height="14" viewBox="0 0 8 14"><rect x="1" y="1" width="6" height="2" fill="#111"/><path d="M1 8h6l-3 4z" fill="#111"/></svg>

<!-- ===== TASKBAR ===== -->
<div class="abs" style="left:0;top:859px;width:1600px;height:41px;background:#05070f"></div>
<div class="abs" style="left:314px;top:859px;width:48px;height:41px;background:#2b2e3a"></div>
<svg style="left:0;top:859px" width="380" height="40" viewBox="0 0 380 40">
  <!-- windows logo -->
  <path d="M15.500 14.200l7-1v7h-7zM23.500 13l8.500-1.200v8.400h-8.500zM15.500 21.200h7v7l-7-1zM23.500 21.200h8.500v8.400l-8.500-1.200z" fill="#fff"/>
  <!-- search -->
  <circle cx="74.500" cy="17.500" r="5.200" fill="none" stroke="#fff" stroke-width="1.500"/><path d="M70.800 21.500l-6 6.500" stroke="#fff" stroke-width="1.600"/>
  <!-- task view -->
  <rect x="114.500" y="14.500" width="11" height="11" fill="none" stroke="#fff" stroke-width="1.300"/><path d="M112 15.500h-1.500v9h1.500M128 15.500h1.500v9h-1.500" fill="none" stroke="#fff" stroke-width="1.300"/>
  <!-- separator -->
  <rect x="150" y="12" width="1" height="16" fill="#555"/><rect x="153" y="12" width="1" height="16" fill="#444"/>
  <!-- powerpoint -->
  <rect x="190" y="12.500" width="12" height="16" fill="#f4e4dc" stroke="#d24726" stroke-width="1"/><circle cx="197" cy="17" r="2.500" fill="none" stroke="#d24726" stroke-width="1.400"/><path d="M194 22h6M194 25h6" stroke="#d24726" stroke-width="1"/>
  <path d="M179 12l14-2.500v21.500l-14-2.500z" fill="#d24726"/><text x="182.500" y="25.500" font-family="Liberation Sans, sans-serif" font-weight="bold" font-size="12" fill="#fff">P</text>
  <!-- explorer -->
  <path d="M229 12.500h7l1.500 2h13v13h-21.500z" fill="#e8b84a"/><rect x="229" y="16" width="21.500" height="12" fill="#f7d978"/><path d="M233 28.500v-6h13.500v6h-3.500v-3h-6.500v3z" fill="#3a96dd"/><rect x="234" y="19.500" width="11.500" height="3" fill="#8cc8f0"/>
  <!-- recorder -->
  <path d="M290 14h8v4h3v8h-3v3h-12z" fill="#1c3f94"/><circle cx="287" cy="21" r="8.500" fill="#1c3f94"/><circle cx="287" cy="21" r="6.800" fill="#d8201c"/><path d="M281 20c2-4 9-4 11.500-1" stroke="#f26a5a" stroke-width="1.500" fill="none"/>
  <!-- ps -->
  <rect x="327.500" y="9.500" width="21" height="21" fill="#0c1a5c" stroke="#8a97d8" stroke-width="1.200"/><text x="331" y="25.500" font-family="Liberation Sans, sans-serif" font-weight="bold" font-size="13" fill="#9ab0f4">Ps</text>
  <!-- underlines -->
  <g fill="#76b9ed"><rect x="171" y="39" width="40" height="2"/><rect x="220" y="39" width="40" height="2"/><rect x="268" y="39" width="41" height="2"/><rect x="314" y="39" width="48" height="2"/></g>
  <rect x="255" y="39" width="5" height="2" fill="#9aa"/>
</svg>
<!-- system tray -->
<svg style="left:1260px;top:860px" width="340" height="40" viewBox="0 0 340 40" fill="#fff">
  <rect x="12" y="15" width="9" height="12.500" rx="1" fill="#4c9a2a"/><rect x="13.500" y="12" width="6" height="3.500" fill="#d8d8d8"/><path d="M16.500 17.500v7M14.500 20.500l2 2 2-2" stroke="#c8f0a0" stroke-width="1" fill="none"/>
  <path d="M36.500 17.500h3l4-3.500v13l-4-3.500h-3z" fill="none" stroke="#fff" stroke-width="1.200"/><path d="M45.500 17.500a4 4 0 0 1 0 6M47.800 15.500a7 7 0 0 1 0 10M50 13.500a10 10 0 0 1 0 14" fill="none" stroke="#fff" stroke-width="1.100"/>
  <circle cx="69" cy="20" r="8" fill="#d8d020"/><circle cx="68" cy="19" r="5" fill="#f0ee50" opacity=".6"/><path d="M69 15.500v9M64.500 20h9" stroke="#1a6a1a" stroke-width="2.400"/>
  <rect x="91.500" y="16.500" width="9" height="7" fill="none" stroke="#fff" stroke-width="1.200"/><rect x="101" y="18.500" width="1.500" height="3"/><path d="M85 18h2v-2.500M85 22h2v2M87 17h3v6h-3z" stroke="#fff" stroke-width="1" fill="#fff"/>
  <rect x="113.500" y="17.500" width="7" height="10" rx="1" fill="none" stroke="#fff" stroke-width="1.200"/><rect x="115" y="13.500" width="4" height="4" fill="none" stroke="#fff" stroke-width="1"/><path d="M120.500 26l1.500 1.500 3-3.500" stroke="#bbb" fill="none" stroke-width="1"/>
  <path d="M137 27a10.500 10.500 0 0 1 10.500-10.500M140 27a7.500 7.500 0 0 1 7.500-7.500M143 27a4.500 4.500 0 0 1 4.500-4.500" fill="none" stroke="#fff" stroke-width="1.200"/><circle cx="147" cy="26.500" r="1.600"/>
  <rect x="157.500" y="13.500" width="22" height="12" rx="1" fill="none" stroke="#fff" stroke-width="1.200"/><path d="M160 16.500h17M160 19h17" stroke="#fff" stroke-width="1" stroke-dasharray="1.500 1"/><path d="M162 22.500h13" stroke="#fff" stroke-width="1.200"/>
  <path d="M299 12h16v11h-6l-2 2.500-2-2.500h-6z"/><path d="M302 15.500h10M302 18h10M302 20.500h6" stroke="#05070f" stroke-width="1"/>
  <rect x="336" y="0" width="1" height="40" fill="#555"/>
</svg>
<div class="t" style="left:1484px;top:865px;font-size:12px;color:#fff">7:27</div>
<div class="t" style="left:1452px;top:883px;font-size:12px;color:#fff;letter-spacing:.600px">2019/2/25/周一</div>

<!-- ===== SOGOU TOOLBAR ===== -->
<div class="abs" style="left:1428px;top:838px;width:172px;height:22px;background:#fff"></div>
<svg style="left:1414px;top:832px" width="186" height="30" viewBox="0 0 186 30" fill="#2a6fc4">
  <path d="M3 4l25-3 2 24-25 4z" fill="#f0642a"/><path d="M24 9c-5-3-15-2-15 2s14 3 14 8-11 5-16 2" fill="none" stroke="#fff" stroke-width="4"/>
  <path d="M37.500 12.500h12v7h-12zM43.500 9v16" fill="none" stroke="#2a6fc4" stroke-width="2"/>
  <path d="M69 9.500c4 3 4 10-1 13-3 2-7 1-9-1 6 0 10-5 10-12z"/>
  <circle cx="83" cy="13" r="2" fill="none" stroke="#2a6fc4" stroke-width="1.300"/><path d="M89 20.500c1.500 0 2 1 1.500 2.500l-1.500 2" stroke="#2a6fc4" stroke-width="2" fill="none"/><circle cx="89.500" cy="20" r="1.500"/>
  <rect x="106" y="8" width="6" height="11" rx="3"/><path d="M103.500 15.500a5.500 5.500 0 0 0 11 0M109 21v4M106 25h6" fill="none" stroke="#2a6fc4" stroke-width="1.500"/>
  <rect x="123.500" y="10.500" width="16" height="11" rx="1.500" fill="none" stroke="#2a6fc4" stroke-width="1.600"/><path d="M126 13.500h11M126 16h11" stroke="#2a6fc4" stroke-width="1.300" stroke-dasharray="1.500 1.200"/><path d="M128 19h7" stroke="#2a6fc4" stroke-width="1.300"/>
  <path d="M151 9l-5 3 2 3.500 2-1v9.500h7v-9.500l2 1 2-3.500-5-3c-1 1.500-4 1.500-5 0z"/>
  <rect x="168" y="9" width="6" height="6"/><rect x="176" y="8" width="6" height="7" fill="none" stroke="#2a6fc4" stroke-width="1.300"/><rect x="168" y="17" width="6" height="6"/><rect x="176" y="17" width="6" height="6"/>
</svg>
</div>
</body>
</html>
